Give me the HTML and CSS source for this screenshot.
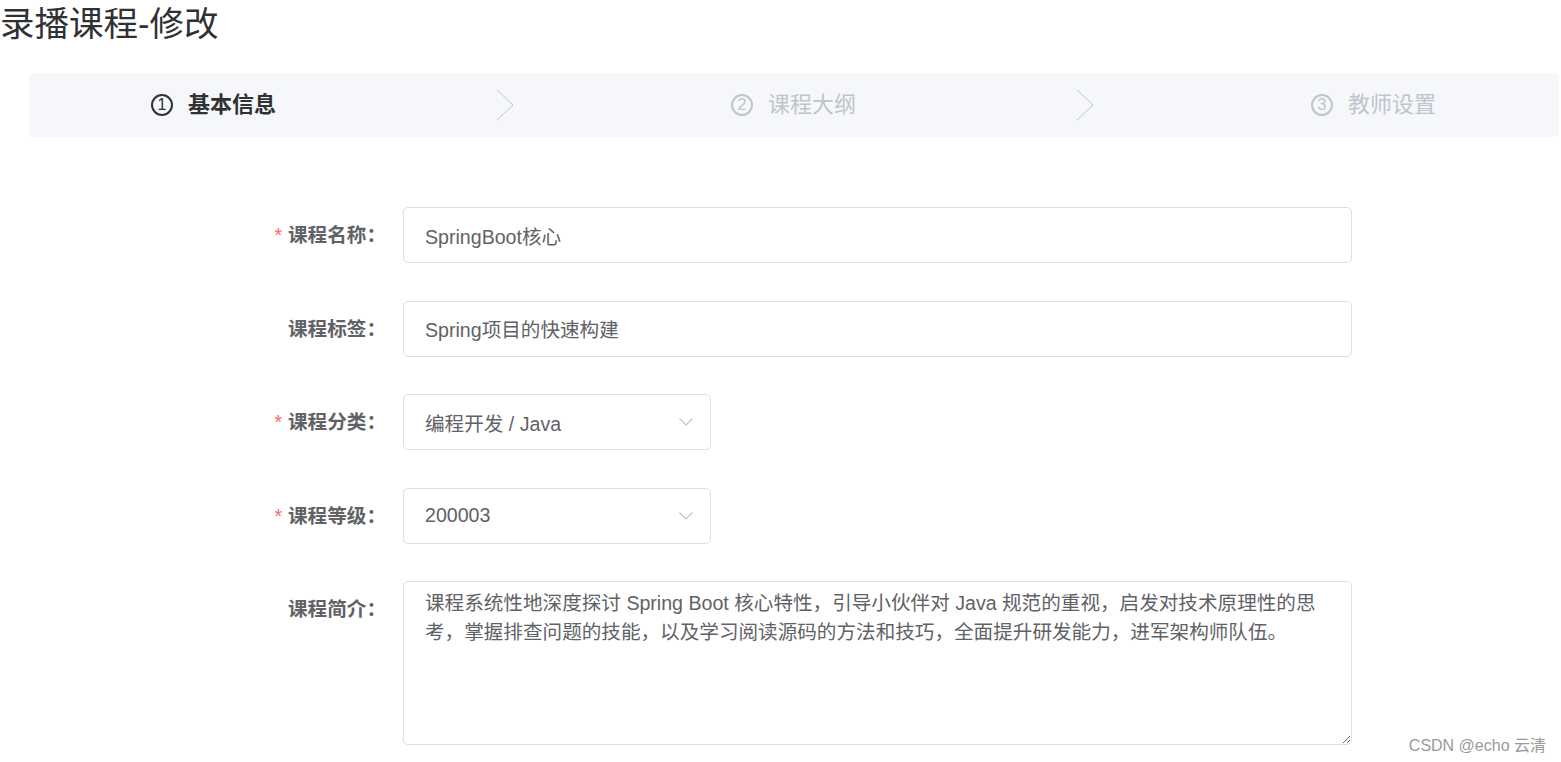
FILE: index.html
```html
<!DOCTYPE html>
<html lang="zh-CN">
<head>
<meta charset="utf-8">
<title>录播课程-修改</title>
<link rel="stylesheet" href="styles.css">
</head>
<body>
<div class="page">
  <h2 class="page-title">录播课程-修改</h2>
  <div class="steps">
    <div class="step is-process">
      <span class="step-icon">1</span>
      <span class="step-title">基本信息</span>
      <span class="step-arrow"><svg width="18" height="32" viewBox="0 0 18 32"><path d="M1 1 L17 16 L1 31" fill="none" stroke="#c0c4cc" stroke-width="1"/></svg></span>
    </div>
    <div class="step">
      <span class="step-icon">2</span>
      <span class="step-title">课程大纲</span>
      <span class="step-arrow"><svg width="18" height="32" viewBox="0 0 18 32"><path d="M1 1 L17 16 L1 31" fill="none" stroke="#c0c4cc" stroke-width="1"/></svg></span>
    </div>
    <div class="step is-last">
      <span class="step-icon">3</span>
      <span class="step-title">教师设置</span>
    </div>
  </div>

  <form class="form">
    <div class="form-item">
      <label class="form-label is-required">课程名称：</label>
      <div class="form-content"><div class="input">SpringBoot核心</div></div>
    </div>
    <div class="form-item">
      <label class="form-label">课程标签：</label>
      <div class="form-content"><div class="input">Spring项目的快速构建</div></div>
    </div>
    <div class="form-item">
      <label class="form-label is-required">课程分类：</label>
      <div class="form-content"><div class="input select"><span>编程开发 / Java</span><svg class="select-arrow" width="14" height="8" viewBox="0 0 14 8"><path d="M0.5 0.5 L7 7 L13.5 0.5" fill="none" stroke="#c0c4cc" stroke-width="1.2"/></svg></div></div>
    </div>
    <div class="form-item">
      <label class="form-label is-required">课程等级：</label>
      <div class="form-content"><div class="input select"><span>200003</span><svg class="select-arrow" width="14" height="8" viewBox="0 0 14 8"><path d="M0.5 0.5 L7 7 L13.5 0.5" fill="none" stroke="#c0c4cc" stroke-width="1.2"/></svg></div></div>
    </div>
    <div class="form-item">
      <label class="form-label">课程简介：</label>
      <div class="form-content"><textarea class="textarea">课程系统性地深度探讨 Spring Boot 核心特性，引导小伙伴对 Java 规范的重视，启发对技术原理性的思考，掌握排查问题的技能，以及学习阅读源码的方法和技巧，全面提升研发能力，进军架构师队伍。</textarea></div>
    </div>
  </form>
</div>
<div class="watermark">CSDN @echo 云清</div>
</body>
</html>
```

FILE: styles.css
```css
html, body {
  margin: 0;
  padding: 0;
  background: #ffffff;
  font-family: "Liberation Sans", "Noto Sans CJK SC", sans-serif;
  overflow: hidden;
}

.page {
  width: 1561px;
  height: 762px;
}

.page-title {
  margin: 0;
  height: 48px;
  line-height: 48px;
  font-size: 34.5px;
  font-weight: normal;
  color: #303133;
}

.steps {
  margin: 25px 2px 0 29px;
  height: 64px;
  background: #f5f7fa;
  border-radius: 5px;
  display: flex;
  align-items: center;
  padding: 0 0 0 122px;
}

.step {
  width: 580px;
  flex: none;
  display: flex;
  align-items: center;
  color: #c0c4cc;
}

.step.is-last {
  width: auto;
}

.step-icon {
  box-sizing: border-box;
  width: 22px;
  height: 22px;
  border: 2px solid currentColor;
  border-radius: 50%;
  display: flex;
  align-items: center;
  justify-content: center;
  font-size: 16px;
  line-height: 1;
  margin-right: 15px;
}

.step-title {
  font-size: 22px;
  line-height: 30px;
}

.step.is-process {
  color: #303133;
}

.step.is-process .step-title {
  font-weight: bold;
}

.step-arrow {
  flex: 1;
  display: flex;
  justify-content: center;
  align-items: center;
  margin-left: 3px;
}

.step-arrow svg {
  display: block;
}

.form {
  margin-top: 70px;
  width: 1352px;
}

.form-item {
  display: flex;
  align-items: flex-start;
  margin-bottom: 37.5px;
}

.form-label {
  box-sizing: border-box;
  width: 403px;
  flex: none;
  text-align: right;
  padding-right: 17px;
  line-height: 56px;
  font-size: 19.6px;
  font-weight: bold;
  color: #606266;
}

.form-label.is-required::before {
  content: "*";
  color: #f56c6c;
  margin-right: 6px;
  font-weight: normal;
}

.form-content {
  flex: 1;
}

.input {
  box-sizing: border-box;
  height: 56px;
  border: 1px solid #dcdfe6;
  border-radius: 5px;
  padding: 0 21px;
  display: flex;
  align-items: center;
  font-size: 19.6px;
  color: #606266;
}

.select {
  width: 308px;
  justify-content: space-between;
  padding-right: 17px;
}

.select-arrow {
  display: block;
}

.textarea {
  box-sizing: border-box;
  display: block;
  width: 949px;
  height: 164px;
  margin: 0;
  border: 1px solid #dcdfe6;
  border-radius: 5px;
  padding: 7px 21px;
  font-family: "Liberation Sans", "Noto Sans CJK SC", sans-serif;
  font-size: 19.6px;
  line-height: 29.4px;
  color: #606266;
  resize: vertical;
  outline: none;
}

.watermark {
  position: absolute;
  right: 15px;
  bottom: 6px;
  font-size: 16px;
  color: #9a9a9a;
  line-height: 20px;
}
```
